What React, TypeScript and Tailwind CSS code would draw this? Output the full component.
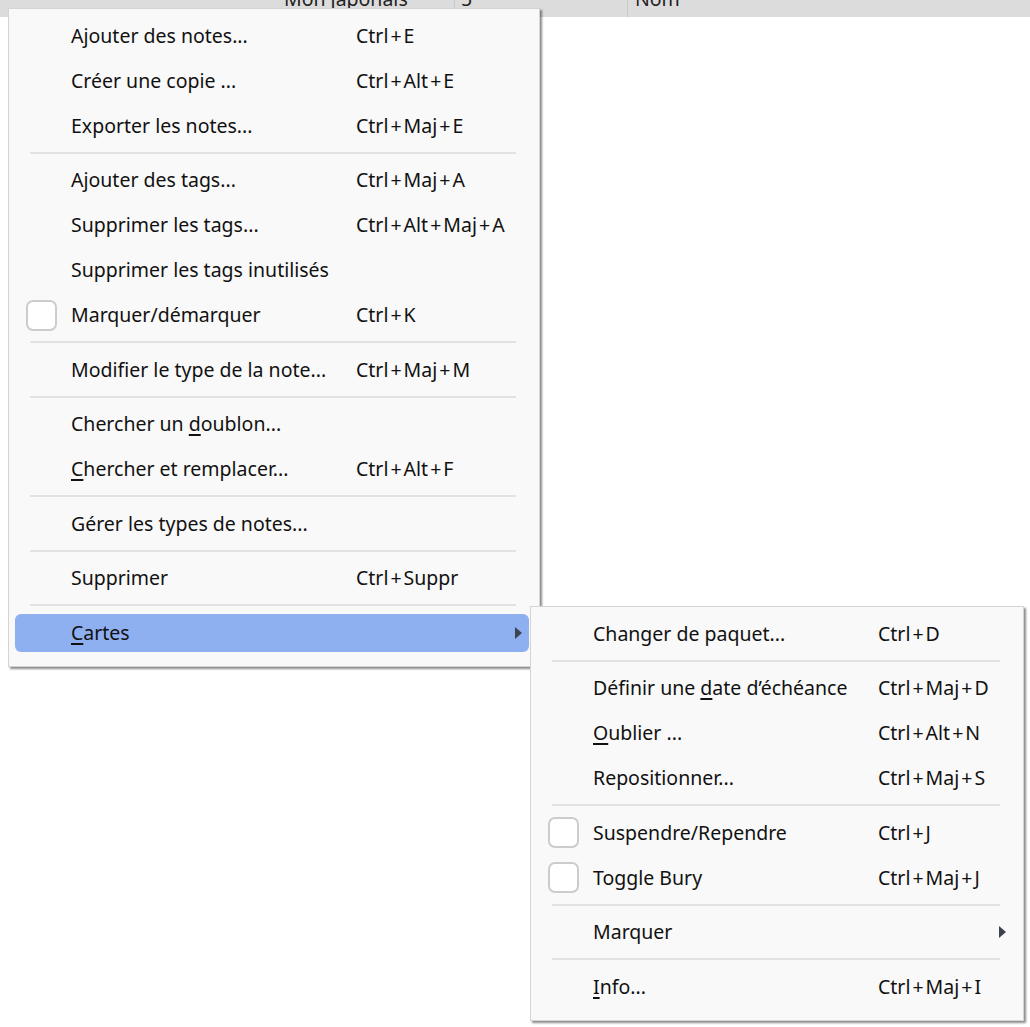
import React from 'react';

type Item =
  | { sep: true }
  | {
      sep?: false;
      label: React.ReactNode;
      keys?: string;
      check?: boolean;
      sub?: boolean;
      active?: boolean;
    };

const u = (c: string) => <span className="underline underline-offset-[3px] decoration-[1.5px]">{c}</span>;

const mainItems: Item[] = [
  { label: 'Ajouter des notes...', keys: 'Ctrl+E' },
  { label: 'Créer une copie ...', keys: 'Ctrl+Alt+E' },
  { label: 'Exporter les notes...', keys: 'Ctrl+Maj+E' },
  { sep: true },
  { label: 'Ajouter des tags...', keys: 'Ctrl+Maj+A' },
  { label: 'Supprimer les tags...', keys: 'Ctrl+Alt+Maj+A' },
  { label: 'Supprimer les tags inutilisés' },
  { label: 'Marquer/démarquer', keys: 'Ctrl+K', check: true },
  { sep: true },
  { label: 'Modifier le type de la note...', keys: 'Ctrl+Maj+M' },
  { sep: true },
  { label: <>Chercher un {u('d')}oublon...</> },
  { label: <>{u('C')}hercher et remplacer...</>, keys: 'Ctrl+Alt+F' },
  { sep: true },
  { label: 'Gérer les types de notes...' },
  { sep: true },
  { label: 'Supprimer', keys: 'Ctrl+Suppr' },
  { sep: true },
  { label: <>{u('C')}artes</>, sub: true, active: true },
];

const cardItems: Item[] = [
  { label: 'Changer de paquet...', keys: 'Ctrl+D' },
  { sep: true },
  { label: <>Définir une {u('d')}ate d’échéance</>, keys: 'Ctrl+Maj+D' },
  { label: <>{u('O')}ublier ...</>, keys: 'Ctrl+Alt+N' },
  { label: 'Repositionner...', keys: 'Ctrl+Maj+S' },
  { sep: true },
  { label: 'Suspendre/Rependre', keys: 'Ctrl+J', check: true },
  { label: 'Toggle Bury', keys: 'Ctrl+Maj+J', check: true },
  { sep: true },
  { label: 'Marquer', sub: true },
  { sep: true },
  { label: <>{u('I')}nfo...</>, keys: 'Ctrl+Maj+I' },
];

// Segoe-style shortcuts: the plus sign gets a little air on each side
function Keys({ keys }: { keys: string }) {
  const parts = keys.split('+');
  return (
    <span className="whitespace-nowrap">
      {parts.map((p, i) => (
        <React.Fragment key={i}>
          {i > 0 && <span className="px-[2px]">+</span>}
          {p}
        </React.Fragment>
      ))}
    </span>
  );
}

function Arrow() {
  return (
    <svg width="7" height="12" viewBox="0 0 7 12" className="shrink-0">
      <path d="M0 0 L7 6 L0 12 Z" fill="#3c4250" />
    </svg>
  );
}

function Row({ it }: { it: Extract<Item, { label: React.ReactNode }> }) {
  return (
    <div className={`h-[45px] flex items-center ${it.active ? 'pl-[6px] pr-[10px]' : 'pr-[17px]'}`}>
      <div
        className={`flex items-center w-full ${it.active ? 'h-[38px] rounded-[6px] bg-[#8fb0f0] pr-[7px]' : 'h-full'}`}
      >
        <div className={`shrink-0 flex items-center ${it.active ? 'w-[56px] pl-[11px]' : 'w-[62px] pl-[17px]'}`}>
          {it.check && <div className="w-[31px] h-[31px] rounded-[7px] border-2 border-[#cccccc] bg-white" />}
        </div>
        <span className="w-[285px] shrink-0 whitespace-nowrap">{it.label}</span>
        <div className="flex-1">{it.keys && <Keys keys={it.keys} />}</div>
        {it.sub && <Arrow />}
      </div>
    </div>
  );
}

function Menu({ items, className }: { items: Item[]; className: string }) {
  return (
    <div
      className={`absolute flex flex-col bg-[#f9f9f9] border border-[#d4d4d4] shadow-[2px_2px_2px_rgba(0,0,0,0.45)] pt-[4px] pb-[11px] ${className}`}
    >
      {items.map((it, i) =>
        it.sep ? (
          <div key={i} className="h-[9.5px] flex items-center pl-[21px] pr-[23px]">
            <div className="h-[2px] w-full bg-[#e2e2e2]" />
          </div>
        ) : (
          <Row key={i} it={it} />
        )
      )}
    </div>
  );
}

export default function App() {
  return (
    <div
      className="relative w-[1030px] h-[1027px] bg-white overflow-hidden text-[19.5px] text-[#111]"
      style={{ fontFamily: '"Noto Sans", "Open Sans", sans-serif' }}
    >
      {/* table header behind the popup, mostly scrolled out of view */}
      <div className="h-[17px] bg-[#dcdcdc] flex overflow-hidden text-[#222] leading-[26px]">
        <div className="w-[275px]" />
        <div className="w-[180px] border-r border-[#c8c8c8] pl-[9px] flex items-end">
          <span className="mb-[5px]">Mon japonais</span>
        </div>
        <div className="w-[173px] border-r border-[#c8c8c8] pl-[6px] flex items-end">
          <span className="mb-[5px]">5</span>
        </div>
        <div className="flex-1 pl-[7px] flex items-end">
          <span className="mb-[5px]">Nom</span>
        </div>
      </div>
      <Menu items={mainItems} className="left-[8px] top-[8px] w-[532px]" />
      <Menu items={cardItems} className="left-[530px] top-[606px] w-[494px]" />
    </div>
  );
}
